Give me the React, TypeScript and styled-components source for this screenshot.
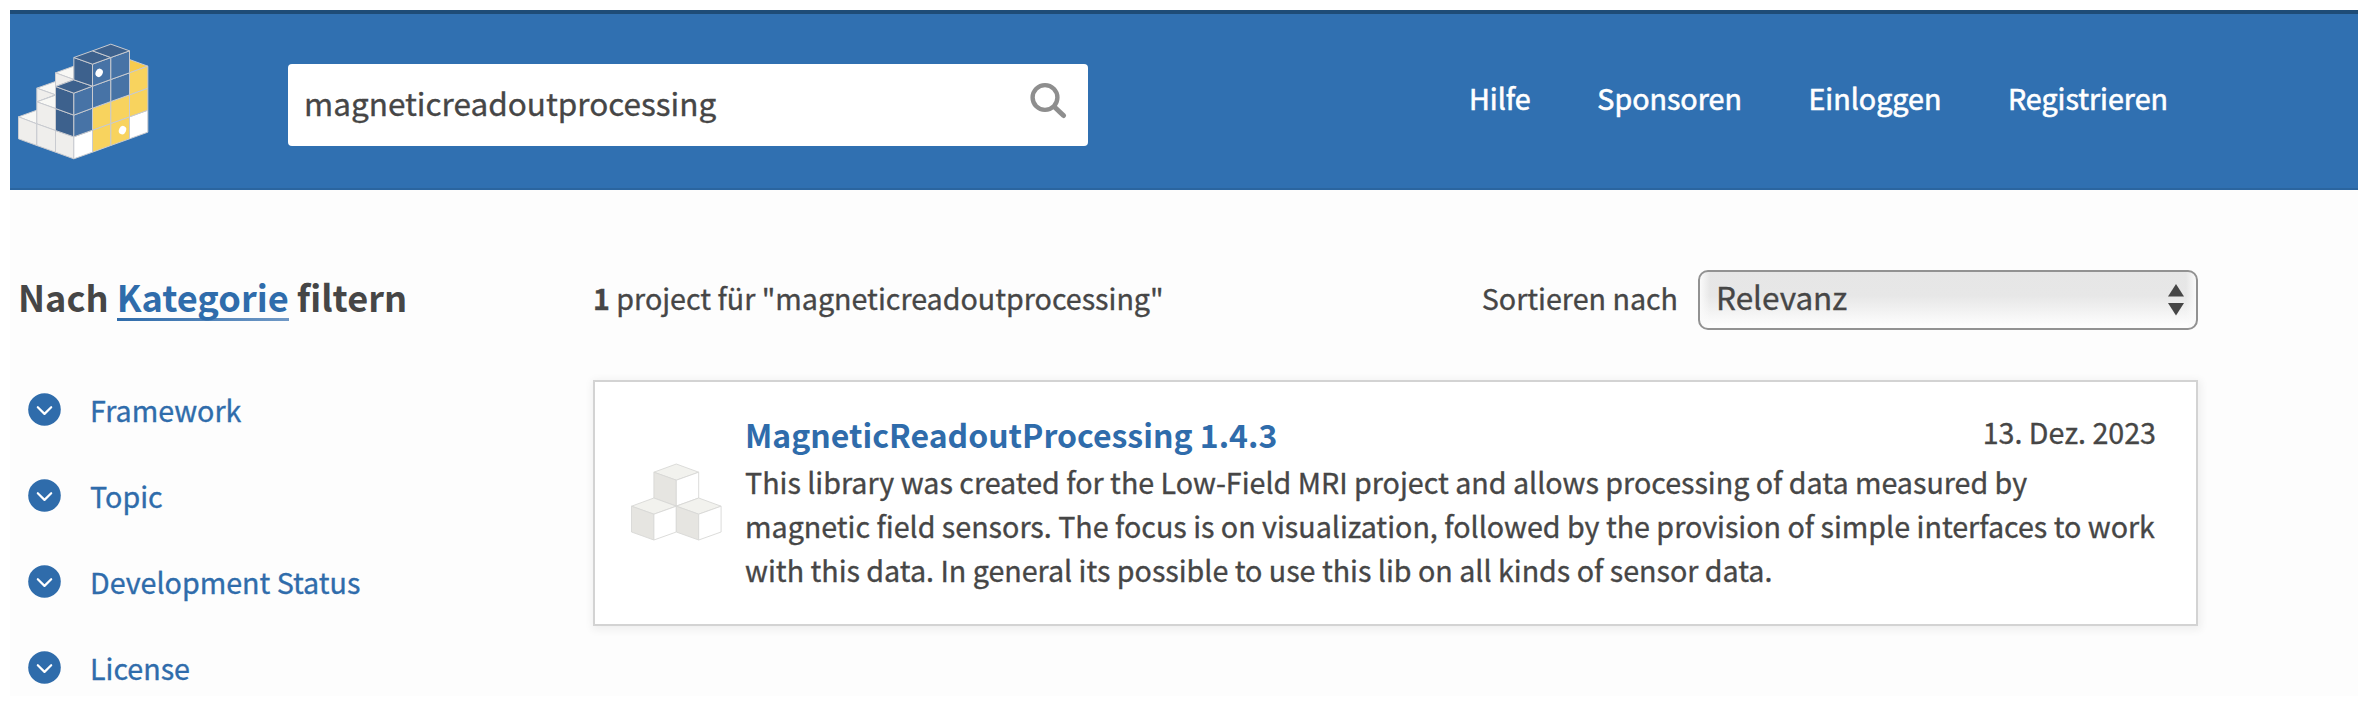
import React from 'react';
import styled, { createGlobalStyle } from 'styled-components';

const ink = '#464646';
const link = '#2f6cab';
const family = '"Noto Sans CJK SC", "Noto Sans", sans-serif';

const GlobalStyle = createGlobalStyle`
  *, *::before, *::after { box-sizing: border-box; }
  body {
    margin: 0;
    background: #fff;
    color: ${ink};
    font-family: ${family};
    font-size: 28.65px;
    line-height: 44px;
    -webkit-text-stroke-width: 0.35px;
  }
`;

const Page = styled.div`
  width: 2368px;
  height: 706px;
  padding: 10px;
  overflow: hidden;
`;

const Frame = styled.div`
  height: 686px;
  background: #fdfdfd;
`;

const Header = styled.header`
  display: flex;
  align-items: flex-start;
  height: 180px;
  padding: 0 190px 0 8px;
  background: #3070b1;
  border-top: 4px solid #1e4c77;
  border-bottom: 2px solid #2b659f;
`;

const LogoLink = styled.a`
  display: block;
  width: 130px;
  height: 116px;
  margin-top: 29px;

  svg { display: block; }
`;

const SearchForm = styled.form`
  display: flex;
  align-items: flex-start;
  justify-content: space-between;
  width: 800px;
  height: 82px;
  margin: 50px 0 0 140px;
  padding: 16px 21px 0 16px;
  background: #fff;
  border-radius: 4px;
`;

const SearchInput = styled.input`
  width: 600px;
  height: 44px;
  padding: 0;
  border: 0;
  outline: 0;
  background: none;
  color: ${ink};
  font-family: ${family};
  font-size: 31.5px;
  line-height: 44px;
  -webkit-text-stroke-width: 0.35px;
`;

const SearchButton = styled.button`
  display: block;
  padding: 0;
  margin-top: 2px;
  border: 0;
  background: none;
  line-height: 0;
`;

const Nav = styled.nav`
  display: flex;
  gap: 66.6px;
  margin: 62px 0 0 auto;
`;

const NavLink = styled.a`
  color: #fff;
  white-space: nowrap;
  -webkit-text-stroke-width: 0.6px;
`;

const Content = styled.main`
  display: flex;
`;

const Sidebar = styled.aside`
  flex: none;
  width: 583px;
  padding: 79px 0 0 8px;
`;

const FilterHeading = styled.h2`
  margin: 0;
  font-size: 36.15px;
  font-weight: 700;
  line-height: 54px;
  white-space: nowrap;
  -webkit-text-stroke-width: 0;
`;

const HeadingLink = styled.a`
  color: ${link};
  background: linear-gradient(90deg, ${link}, #7099c6) 0 48px / 100% 3px no-repeat;
`;

const FilterList = styled.ul`
  display: flex;
  flex-direction: column;
  gap: 42px;
  margin: 65px 0 0;
  padding: 0 0 0 10px;
  list-style: none;
`;

const FilterItem = styled.li`
  display: flex;
  align-items: flex-start;
  height: 44px;
  color: ${link};
`;

const Bullet = styled.span`
  display: flex;
  width: 33px;
  height: 33px;
  margin: 5px 29px 0 0;

  svg { display: block; }
`;

const FilterName = styled.span`
  white-space: nowrap;
`;

const Results = styled.section`
  width: 1605px;
  padding-top: 80px;
`;

const Toolbar = styled.div`
  display: flex;
  align-items: center;
  height: 60px;
  padding-bottom: 5px;
`;

const Summary = styled.p`
  margin: 0;
  white-space: nowrap;
`;

const SortLabel = styled.label`
  margin-left: auto;
  white-space: nowrap;
`;

const SortSelect = styled.div`
  display: flex;
  justify-content: space-between;
  align-items: flex-start;
  width: 500px;
  height: 60px;
  margin: 5px 0 0 20px;
  padding: 2px 12px 0 16px;
  border: 2px solid #929292;
  border-radius: 10px;
  background:
    linear-gradient(90deg, #fafafa, rgba(250, 250, 250, 0) 10px calc(100% - 10px), #fafafa),
    linear-gradient(#e6e6e6 0%, #e7e7e7 42%, #eeeeee 60%, #fdfdfd 95%);
  font-size: 31.5px;

  svg { display: block; margin-top: 10px; }
`;

const Card = styled.article`
  display: flex;
  height: 246px;
  margin-top: 50px;
  padding: 30px 40px 0 36px;
  background: #fff;
  border: 2px solid #d3d3d3;
  box-shadow: 1px 2px 8px 2px rgba(0, 0, 0, 0.06);
`;

const Thumb = styled.div`
  flex: none;
  width: 114px;
  padding-top: 51px;

  svg { display: block; }
`;

const CardBody = styled.div`
  flex: 1;
`;

const CardTop = styled.div`
  display: flex;
  justify-content: space-between;
  align-items: flex-start;
  height: 48px;
`;

const PackageName = styled.h3`
  margin: 0;
  color: ${link};
  font-size: 32px;
  font-weight: 700;
  line-height: 44px;
  white-space: nowrap;
  -webkit-text-stroke-width: 0;
`;

const ReleaseDate = styled.time`
  line-height: 40px;
  white-space: nowrap;
`;

const Description = styled.p`
  margin: 0;

  span { display: block; white-space: nowrap; }
`;

const FacePath = ({ fill, d }: { fill: string; d: string }) => (
  <path d={d} fill={fill} stroke="#c9cbd0" strokeWidth="3" strokeLinejoin="round" />
);

const Logo = () => (
  <svg width="132" height="117" viewBox="53.5 128.5 396 351" aria-label="PyPI">
    <FacePath fill="#f8f8f5" d="M166 218 221 198V238Z" />
    <FacePath fill="#efeeec" d="M166 218 221 238 166 259Z" />
    <FacePath fill="#f8f8f5" d="M110 264 166 244V284Z" />
    <FacePath fill="#efeeec" d="M110 264 166 284 110 305Z" />
    <FacePath fill="#f8f8f5" d="M110 305 166 285V325Z" />
    <FacePath fill="#f8f8f5" d="M55 350 110 330V371Z" />
    <FacePath fill="#efeeec" d="M55 350 110 371V436L55 416Z" />
    <FacePath fill="#efeeec" d="M110 305 166 325V391L110 371Z" />
    <FacePath fill="#efeeec" d="M110 371 166 391V456L110 436Z" />
    <FacePath fill="#efeeec" d="M166 391 221 410V476L166 456Z" />
    <FacePath fill="#ffffff" d="M221 410 277 390V456L221 476Z" />
    <FacePath fill="#ffffff" d="M388 350 443 330V396L388 416Z" />
    <FacePath fill="#f7cb4d" d="M388 178 443 198 388 218Z" />
    <FacePath fill="#f8d35e" d="M277 390 332 370V436L277 456Z" />
    <FacePath fill="#f8d35e" d="M332 370 388 350V416L332 436Z" />
    <FacePath fill="#f8d35e" d="M277 324 332 304V370L277 390Z" />
    <FacePath fill="#f8d35e" d="M332 304 388 284V350L332 370Z" />
    <FacePath fill="#f8d35e" d="M388 284 443 264V330L388 350Z" />
    <FacePath fill="#f8d35e" d="M388 218 443 198V264L388 284Z" />
    <FacePath fill="#3d618d" d="M166 325 221 345V410L166 391Z" />
    <FacePath fill="#3d618d" d="M166 259 221 279V345L166 325Z" />
    <FacePath fill="#4773a6" d="M221 345 277 324V390L221 410Z" />
    <FacePath fill="#4773a6" d="M221 279 277 258V324L221 345Z" />
    <FacePath fill="#4773a6" d="M277 258 332 238V304L277 324Z" />
    <FacePath fill="#4773a6" d="M332 238 388 218V284L332 304Z" />
    <FacePath fill="#3d618d" d="M166 259 221 239 277 258 221 279Z" />
    <FacePath fill="#3d618d" d="M221 172 277 192V258L221 239Z" />
    <FacePath fill="#4773a6" d="M277 192 332 172V238L277 258Z" />
    <FacePath fill="#4773a6" d="M332 172 388 152V218L332 238Z" />
    <FacePath fill="#3d618d" d="M221 172 277 152 332 172 277 192Z" />
    <FacePath fill="#3d618d" d="M277 152 332 132 388 152 332 172Z" />
    <ellipse cx="297" cy="218" rx="10.5" ry="13" fill="#fff" transform="rotate(25 297 218)" />
    <ellipse cx="367" cy="390" rx="10.5" ry="13" fill="#fff" transform="rotate(25 367 390)" />
  </svg>
);

const SearchIcon = () => (
  <svg width="37" height="37" viewBox="0 0 37 37" fill="none" stroke="#8e8e8e" strokeLinecap="round">
    <circle cx="15" cy="15.5" r="12.4" strokeWidth="4.4" />
    <path d="M24.5 25 33.5 33.5" strokeWidth="5" />
  </svg>
);

const ChevronIcon = () => (
  <svg width="33" height="33" viewBox="0 0 33 33">
    <circle cx="16.5" cy="16.5" r="16.3" fill={link} />
    <path d="M9.8 14.2 16.5 20.9 23.2 14.2" fill="none" stroke="#fff" strokeWidth="2.2" strokeLinecap="round" strokeLinejoin="round" />
  </svg>
);

const cubeOffsets = [[22.4, 0], [0, 34], [44.8, 34]];

const CubesIcon = () => (
  <svg width="92" height="78" viewBox="-0.5 -1 92 78" stroke="#d8d8d6" strokeWidth="0.9" strokeLinejoin="round">
    {cubeOffsets.map(([x, y]) => (
      <g key={x} transform={`translate(${x} ${y})`}>
        <path fill="#f2f2ee" d="M0 8.2 22.4 0 44.8 8.2 22.4 16.2Z" />
        <path fill="#e6e5e1" d="M0 8.2 22.4 16.2V42L0 34Z" />
        <path fill="#fff" d="M22.4 16.2 44.8 8.2V34L22.4 42Z" />
      </g>
    ))}
  </svg>
);

const SortArrows = () => (
  <svg width="16" height="32" viewBox="0 0 16 32" fill={ink}>
    <path d="M8 0 16 12.6H0Z" />
    <path d="M8 31.5 16 19H0Z" />
  </svg>
);

const navItems = ['Hilfe', 'Sponsoren', 'Einloggen', 'Registrieren'];
const filters = ['Framework', 'Topic', 'Development Status', 'License'];

export default function App() {
  return (
    <Page>
      <GlobalStyle />
      <Frame>
        <Header>
          <LogoLink><Logo /></LogoLink>
          <SearchForm>
            <SearchInput defaultValue="magneticreadoutprocessing" spellCheck={false} />
            <SearchButton type="button" aria-label="Suche"><SearchIcon /></SearchButton>
          </SearchForm>
          <Nav>
            {navItems.map((item) => <NavLink key={item}>{item}</NavLink>)}
          </Nav>
        </Header>
        <Content>
          <Sidebar>
            <FilterHeading>Nach <HeadingLink>Kategorie</HeadingLink> filtern</FilterHeading>
            <FilterList>
              {filters.map((name) => (
                <FilterItem key={name}>
                  <Bullet><ChevronIcon /></Bullet>
                  <FilterName>{name}</FilterName>
                </FilterItem>
              ))}
            </FilterList>
          </Sidebar>
          <Results>
            <Toolbar>
              <Summary><strong>1</strong> project für "magneticreadoutprocessing"</Summary>
              <SortLabel>Sortieren nach</SortLabel>
              <SortSelect>Relevanz<SortArrows /></SortSelect>
            </Toolbar>
            <Card>
              <Thumb><CubesIcon /></Thumb>
              <CardBody>
                <CardTop>
                  <PackageName>MagneticReadoutProcessing 1.4.3</PackageName>
                  <ReleaseDate>13. Dez. 2023</ReleaseDate>
                </CardTop>
                <Description>
                  <span>This library was created for the Low-Field MRI project and allows processing of data measured by</span>
                  <span>magnetic field sensors. The focus is on visualization, followed by the provision of simple interfaces to work</span>
                  <span>with this data. In general its possible to use this lib on all kinds of sensor data.</span>
                </Description>
              </CardBody>
            </Card>
          </Results>
        </Content>
      </Frame>
    </Page>
  );
}
